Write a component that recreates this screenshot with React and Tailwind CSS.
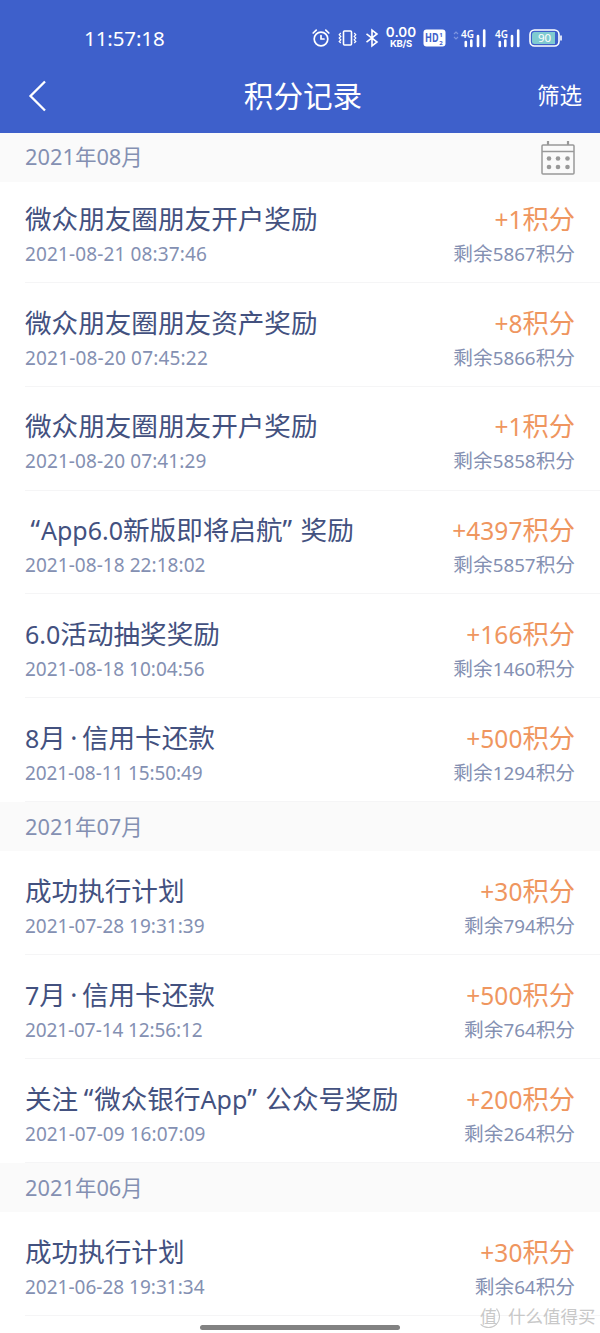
import React from "react";

const sections = [
  {
    month: "2021年08月",
    calendar: true,
    rows: [
      ["微众朋友圈朋友开户奖励", "2021-08-21 08:37:46", "+1积分", "剩余5867积分", "tracking-[0.13px]"],
      ["微众朋友圈朋友资产奖励", "2021-08-20 07:45:22", "+8积分", "剩余5866积分", "tracking-[0.18px]"],
      ["微众朋友圈朋友开户奖励", "2021-08-20 07:41:29", "+1积分", "剩余5858积分", "tracking-[0.1px]"],
      ["“App6.0新版即将启航”奖励", "2021-08-18 22:18:02", "+4397积分", "剩余5857积分", "tracking-[0.05px]"],
      ["6.0活动抽奖奖励", "2021-08-18 10:04:56", "+166积分", "剩余1460积分", "tracking-[0px]"],
      ["8月·信用卡还款", "2021-08-11 15:50:49", "+500积分", "剩余1294积分", "tracking-[-0.1px]"],
    ],
  },
  {
    month: "2021年07月",
    rows: [
      ["成功执行计划", "2021-07-28 19:31:39", "+30积分", "剩余794积分", "tracking-[0px]"],
      ["7月·信用卡还款", "2021-07-14 12:56:12", "+500积分", "剩余764积分", "tracking-[-0.1px]"],
      ["关注“微众银行App”公众号奖励", "2021-07-09 16:07:09", "+200积分", "剩余264积分", "tracking-[0.05px]"],
    ],
  },
  {
    month: "2021年06月",
    rows: [["成功执行计划", "2021-06-28 19:31:34", "+30积分", "剩余64积分", "tracking-[0px]"]],
  },
];

// Latin runs are set slightly smaller than the Chinese text around them.
function Mixed({ text, latin }) {
  const parts = text.match(/[“”·]|[\x20-\x7e]+|[^\x20-\x7e“”·]+/g) || [];
  return parts.map((p, i) => {
    if (p === "“") return <span key={i} className="inline-block w-[16px] pr-[1px] text-right">{p}</span>;
    if (p === "”") return <span key={i} className="inline-block w-[18px] text-left">{p}</span>;
    if (p === "·") return <span key={i} className="inline-block w-[16px] text-center">{p}</span>;
    return /[\x20-\x7e]/.test(p) ? <span key={i} className={latin}>{p}</span> : <span key={i}>{p}</span>;
  });
}

function Row({ row, first }) {
  const [title, date, points, left, tracking] = row;
  return (
    <div className={first ? "h-[101px] pl-[25px] pt-[18.5px]" : "h-[103.8px] pl-[25px] pt-[21.5px]"}>
      <div className="flex h-full justify-between border-b border-[#f5f5f6] pr-[25px] whitespace-nowrap">
        <div>
          <div className="h-9 text-[26.6px] leading-9 text-[#43517f]"><Mixed text={title} latin="text-[25px]" /></div>
          <div className={"h-[34px] text-[19px] leading-[34px] text-[#8490b2] " + tracking}>{date}</div>
        </div>
        <div className="text-right">
          <div className="h-9 text-[26.3px] leading-9 text-[#ef965f]"><Mixed text={points} latin="text-[24.5px]" /></div>
          <div className="h-[34px] text-[19.7px] leading-[34px] text-[#8490b2]"><Mixed text={left} latin="text-[18.8px]" /></div>
        </div>
      </div>
    </div>
  );
}

function Calendar() {
  return (
    <svg width="36" height="36" viewBox="0 0 36 36" fill="none" stroke="#999" strokeWidth="1.5" className="mt-[2px]">
      <rect x="2" y="5" width="32" height="29" rx="1" />
      <path d="M2 11.5H34" />
      <path d="M8 1V5M28 1V5" strokeWidth="2.2" />
      <g fill="#999" stroke="none">
        <circle cx="9" cy="18.5" r="2.3" /><circle cx="18" cy="18.5" r="2.3" /><circle cx="27.5" cy="18.5" r="2.3" />
        <circle cx="9" cy="27" r="2.3" /><circle cx="18" cy="27" r="2.3" /><circle cx="27.5" cy="27" r="2.3" />
      </g>
    </svg>
  );
}

function Signal() {
  return (
    <svg width="26" height="20" viewBox="0 0 26 20" className="overflow-visible">
      <text x="0" y="9.5" fontSize="11" fontWeight="600" fill="white" textLength="13" lengthAdjust="spacingAndGlyphs">4G</text>
      <path d="M4.8 14V18M10.3 12.5V18M17 8V18M23.2 2.5V18" stroke="white" strokeWidth="2.6" strokeLinecap="round" />
    </svg>
  );
}

function StatusBar() {
  return (
    <div className="flex h-[76px] items-center pl-[84px] text-white">
      <div className="w-[228px] text-[20.5px] tracking-[-0.1px]">11:57:18</div>
      <svg width="18" height="20" viewBox="0 0 18 20" fill="none" stroke="white" strokeWidth="1.7" strokeLinecap="round">
        <circle cx="9" cy="11" r="6.8" /><path d="M9 7.5V11H12M1.2 5L4.2 2.2M16.8 5L13.8 2.2" />
      </svg>
      <svg className="ml-2" width="19" height="20" viewBox="0 0 19 20" fill="none" stroke="white" strokeWidth="1.6">
        <rect x="5.5" y="3" width="8" height="14" rx="1" />
        <path d="M2.8 5L1.2 6.7L2.8 8.4L1.2 10.1L2.8 11.8L1.2 13.5L2.8 15M16.2 5L17.8 6.7L16.2 8.4L17.8 10.1L16.2 11.8L17.8 13.5L16.2 15" strokeWidth="1.2" />
      </svg>
      <svg className="ml-2" width="14" height="20" viewBox="0 0 14 20" fill="none" stroke="white" strokeWidth="1.6">
        <path d="M1.5 5.8L12 14L7 17.8V2.2L12 6L1.5 14.2" />
      </svg>
      <div className="ml-[7px] flex w-[30px] flex-col items-center">
        <div className="font-[Inter] text-[13.5px] leading-[12px] font-semibold">0.00</div>
        <div className="font-[Inter] text-[9.5px] leading-[12px] font-bold tracking-[-0.2px]">KB/S</div>
      </div>
      <svg className="ml-[7px]" width="23" height="18" viewBox="0 0 23 18">
        <rect x="0.5" y="0.5" width="22" height="17" rx="3" fill="white" />
        <g fill="#3e60cb" fontWeight="700">
          <text x="2" y="13.4" fontSize="12" textLength="13.5" lengthAdjust="spacingAndGlyphs">HD</text>
          <text x="16.3" y="8" fontSize="6">1</text>
          <text x="16.3" y="15.5" fontSize="6">2</text>
        </g>
      </svg>
      <svg className="ml-[7px]" width="6" height="20" viewBox="0 0 6 20" fill="none" stroke="#7c94df" strokeWidth="1.2"><path d="M1 6L3 4L5 6M1 9L3 11L5 9" /></svg>
      <div className="ml-[2px] flex gap-[8px]"><Signal /><Signal /></div>
      <svg className="ml-[8px]" width="34" height="18" viewBox="0 0 34 18">
        <rect x="1" y="1" width="29" height="16" rx="4.5" fill="none" stroke="white" strokeWidth="1.6" />
        <path d="M5.5 3H26V15H5.5Q3 15 3 12.5V5.5Q3 3 5.5 3Z" fill="#7fcbd0" />
        <path d="M32 6.5V11.5" stroke="white" strokeWidth="1.6" />
        <text x="15.5" y="13" fontSize="11.5" textAnchor="middle" fill="white">90</text>
      </svg>
    </div>
  );
}

export default function App() {
  return (
    <div className="relative h-[1333px] w-[600px] overflow-hidden bg-white font-['Noto_Sans','Noto_Sans_CJK_SC',sans-serif]">
      <header className="h-[132.5px] bg-[#3e60cb] text-white">
        <StatusBar />
        <div className="grid h-[40px] grid-cols-[1fr_auto_1fr] items-center pr-[18px] pl-7">
          <svg width="54" height="32" viewBox="0 0 54 32" fill="none" stroke="white" strokeWidth="2.3"><path d="M17 1.5L2.5 16L17 30.5" /></svg>
          <h1 className="mr-[4px] text-[29.6px] leading-10">积分记录</h1>
          <button className="text-right text-[22.5px] leading-10">筛选</button>
        </div>
      </header>
      <main>
        {sections.map((s) => (
          <section key={s.month}>
            <div className="flex h-[49.5px] items-center justify-between bg-[#fafafa] pr-6 pl-[25px] text-[21.5px] text-[#8490b2]">
              <div className="pt-px"><Mixed text={s.month} latin="text-[21.8px]" /></div>
              {s.calendar && <Calendar />}
            </div>
            {s.rows.map((r, i) => <Row key={r[1]} row={r} first={s.calendar && i === 0} />)}
          </section>
        ))}
      </main>
      <div className="absolute top-[1324.5px] left-[200px] h-[5px] w-[200px] rounded-full bg-[#828282]" />
      <div className="absolute top-[1305px] left-[477px] flex items-center gap-2 text-[#c8c8c8]">
        <div className="flex size-[23px] items-center justify-center rounded-full border border-t-transparent border-r-[#c9c9c9] border-b-[#c9c9c9] border-l-transparent text-[17px] leading-none">值</div>
        <div className="text-[17.5px] leading-[23px] whitespace-nowrap">什么值得买</div>
      </div>
    </div>
  );
}
